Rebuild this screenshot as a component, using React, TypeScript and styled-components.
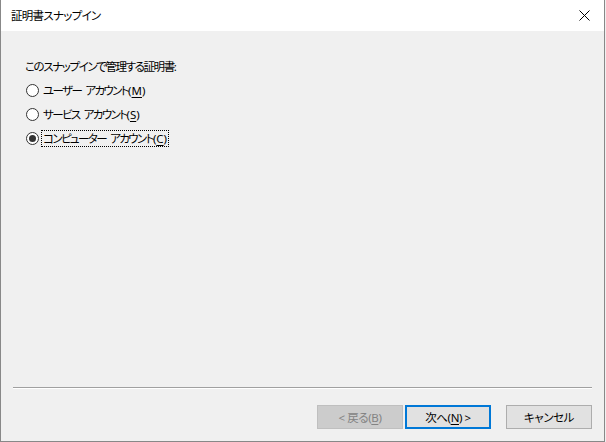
import React, { useState } from "react";
import styled, { createGlobalStyle } from "styled-components";

const Global = createGlobalStyle`
  html, body {
    margin: 0;
    padding: 0;
    background: #f0f0f0;
  }
  body {
    font-family: "Noto Sans", "Noto Sans CJK JP", sans-serif;
    font-size: 11.5px;
    font-feature-settings: "palt";
    color: #000;
  }
`;

const Window = styled.div`
  box-sizing: border-box;
  width: 605px;
  height: 442px;
  border: 1px solid #888888;
  border-top: none;
  background: #f0f0f0;
  display: flex;
  flex-direction: column;
`;

const TitleBar = styled.div`
  height: 31px;
  background: #ffffff;
  display: flex;
  align-items: center;
  justify-content: space-between;
  padding: 0 0 0 10px;
`;

const Title = styled.span`
  letter-spacing: -0.7px;
  padding-bottom: 1px;
`;

const CloseButton = styled.button`
  width: 46px;
  height: 31px;
  border: none;
  background: transparent;
  display: flex;
  align-items: center;
  justify-content: center;
  padding: 0 0 0 6px;
`;

const Body = styled.div`
  flex: 1;
  padding: 27px 0 0 24px;
  display: flex;
  flex-direction: column;
`;

const Heading = styled.div`
  letter-spacing: -1.4px;
  height: 17px;
  line-height: 17px;
  margin-bottom: 7px;
`;

const Options = styled.div`
  display: flex;
  flex-direction: column;
  gap: 7px;
`;

const Option = styled.label`
  display: flex;
  align-items: center;
  height: 17px;
  cursor: default;
`;

const Circle = styled.span<{ checked: boolean }>`
  box-sizing: border-box;
  width: 13px;
  height: 13px;
  margin: 0 3px 0 1px;
  border-radius: 50%;
  border: 1px solid #333333;
  background: #ffffff;
  display: flex;
  align-items: center;
  justify-content: center;
  &::after {
    content: "";
    width: 7px;
    height: 7px;
    border-radius: 50%;
    background: ${({ checked }) => (checked ? "#333333" : "transparent")};
  }
`;

const OptionText = styled.span<{ focused: boolean }>`
  line-height: 15px;
  padding: 0 1px 0 1px;
  white-space: pre;
  outline: ${({ focused }) => (focused ? "1px dotted #000" : "none")};
  outline-offset: 0;
`;

const Kana = styled.span`
  letter-spacing: -1.6px;
`;

const Gap = styled.span`
  display: inline-block;
  width: 4px;
`;

const Key = styled.span`
  letter-spacing: 0;
  u {
    text-decoration: underline;
    text-underline-offset: 2px;
  }
`;

const Footer = styled.div`
  padding: 0 12px 12px 12px;
  display: flex;
  flex-direction: column;
`;

const Separator = styled.div`
  height: 1px;
  background: #a0a0a0;
  border-bottom: 1px solid #ffffff;
  margin-bottom: 16px;
`;

const ButtonRow = styled.div`
  display: flex;
  justify-content: flex-end;
`;

const Button = styled.button<{ variant?: "disabled" | "default" }>`
  box-sizing: border-box;
  width: 86px;
  height: 24px;
  font-family: inherit;
  font-size: 11.5px;
  letter-spacing: -0.4px;
  font-feature-settings: "palt";
  white-space: pre;
  color: ${({ variant }) => (variant === "disabled" ? "#838383" : "#000")};
  background: ${({ variant }) => (variant === "disabled" ? "#cccccc" : "#e1e1e1")};
  border: ${({ variant }) =>
    variant === "disabled"
      ? "1px solid #bfbfbf"
      : variant === "default"
      ? "2px solid #0078d7"
      : "1px solid #adadad"};
  padding: 0;
  & + & {
    margin-left: 2px;
  }
  &:last-child {
    margin-left: 15px;
  }
  u {
    text-underline-offset: 2px;
  }
`;

const options = [
  { label: ["ユーザー", "アカウント"], key: "M" },
  { label: ["サービス", "アカウント"], key: "S" },
  { label: ["コンピューター", "アカウント"], key: "C" },
];

export default function App() {
  const [selected, setSelected] = useState(2);
  return (
    <>
      <Global />
      <Window>
        <TitleBar>
          <Title>証明書スナップイン</Title>
          <CloseButton aria-label="閉じる">
            <svg width="11" height="11" viewBox="0 0 11 11">
              <path d="M0.5 0.5 L10.5 10.5 M10.5 0.5 L0.5 10.5" stroke="#000" strokeWidth="1" />
            </svg>
          </CloseButton>
        </TitleBar>
        <Body>
          <Heading>このスナップインで管理する証明書:</Heading>
          <Options>
            {options.map((o, i) => (
              <Option key={o.key} onClick={() => setSelected(i)}>
                <Circle checked={selected === i} />
                <OptionText focused={selected === i}>
                  <Kana>{o.label[0]}</Kana>
                  <Gap> </Gap>
                  <Kana>{o.label[1]}</Kana>
                  <Key>
                    (<u>{o.key}</u>)
                  </Key>
                </OptionText>
              </Option>
            ))}
          </Options>
        </Body>
        <Footer>
          <Separator />
          <ButtonRow>
            <Button variant="disabled">
              &lt; 戻る(<u>B</u>)
            </Button>
            <Button variant="default">
              次へ(<u>N</u>) &gt;
            </Button>
            <Button>キャンセル</Button>
          </ButtonRow>
        </Footer>
      </Window>
    </>
  );
}
